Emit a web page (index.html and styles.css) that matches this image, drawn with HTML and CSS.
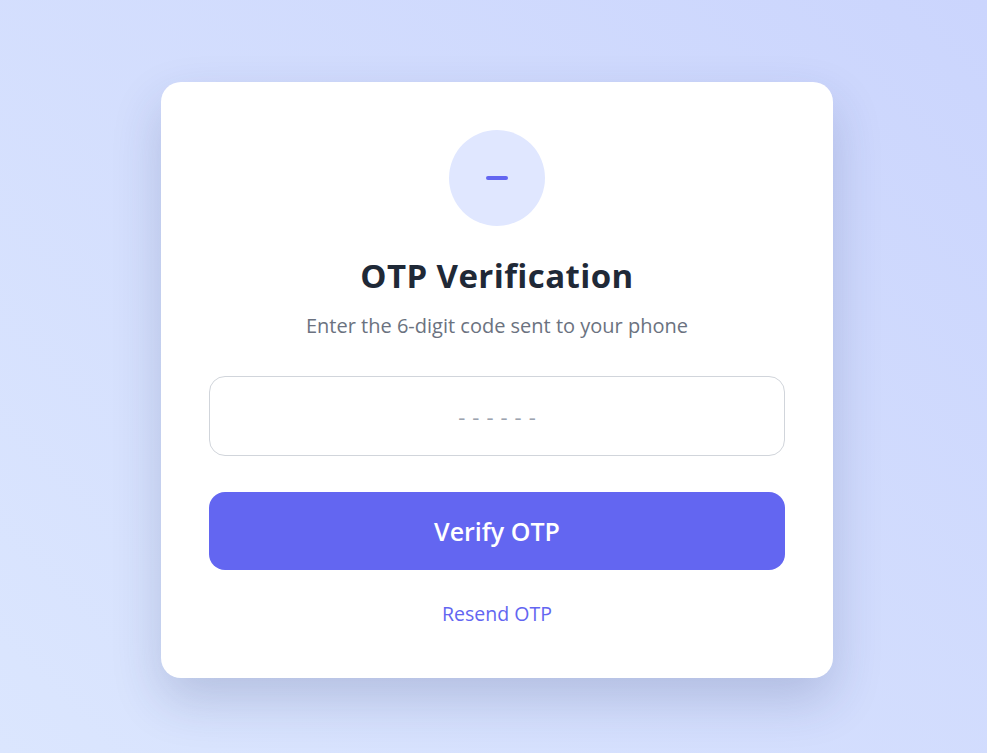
FILE: index.html
```html
<!DOCTYPE html>
<html lang="en">
<head>
<meta charset="utf-8">
<title>OTP Verification</title>
<link rel="stylesheet" href="styles.css">
</head>
<body>
<main class="page">
  <section class="card">
    <div class="icon-wrap">
      <svg class="icon" width="24" height="24" viewBox="0 0 24 24" aria-hidden="true">
        <line x1="3" y1="12" x2="21" y2="12" stroke="#6366f1" stroke-width="4" stroke-linecap="round"/>
      </svg>
    </div>
    <h1 class="title">OTP Verification</h1>
    <p class="subtitle">Enter the 6-digit code sent to your phone</p>
    <input class="otp-input" type="text" maxlength="6" placeholder="------">
    <button class="verify-btn" type="button">Verify OTP</button>
    <a class="resend" href="#">Resend OTP</a>
  </section>
</main>
</body>
</html>
```
FILE: styles.css
```css
* { box-sizing: border-box; }
html, body { margin: 0; padding: 0; }
body {
  font-family: "Open Sans", "Noto Sans", sans-serif;
  background: linear-gradient(45deg, #dbe6fe 0%, #cbd5fd 100%);
  min-height: 100vh;
}
.page {
  min-height: 100vh;
  display: flex;
  align-items: center;
  justify-content: center;
  padding: 6px 0 0 7px;
}
.card {
  width: 672px;
  background: #ffffff;
  border-radius: 20px;
  padding: 48px 48px 51px;
  display: flex;
  flex-direction: column;
  align-items: center;
  box-shadow: 0 22px 50px rgba(40, 55, 110, 0.2);
}
.icon-wrap {
  width: 96px;
  height: 96px;
  border-radius: 50%;
  background: #e0e7ff;
  display: flex;
  align-items: center;
  justify-content: center;
}
.icon { display: block; }
.title {
  margin: 31px 0 0;
  font-size: 33px;
  line-height: 38px;
  font-weight: 700;
  color: #1f2937;
  letter-spacing: 0.4px;
}
.subtitle {
  margin: 17px 0 0;
  font-size: 20px;
  line-height: 27px;
  color: #6b7280;
}
.otp-input {
  margin-top: 37px;
  width: 100%;
  height: 80px;
  border: 1px solid #d1d5db;
  border-radius: 16px;
  text-align: center;
  font-family: inherit;
  font-size: 22px;
  letter-spacing: 7px;
  text-indent: 7px;
  color: #111827;
  outline: none;
  background: #fff;
}
.otp-input::placeholder { color: #9ca3af; }
.verify-btn {
  margin-top: 36px;
  width: 100%;
  height: 78px;
  border: none;
  border-radius: 16px;
  background: #6366f1;
  color: #ffffff;
  font-family: inherit;
  font-size: 25px;
  font-weight: 600;
  cursor: pointer;
}
.resend {
  margin-top: 30px;
  font-size: 19.5px;
  line-height: 27px;
  color: #6366f1;
  text-decoration: none;
}
```
